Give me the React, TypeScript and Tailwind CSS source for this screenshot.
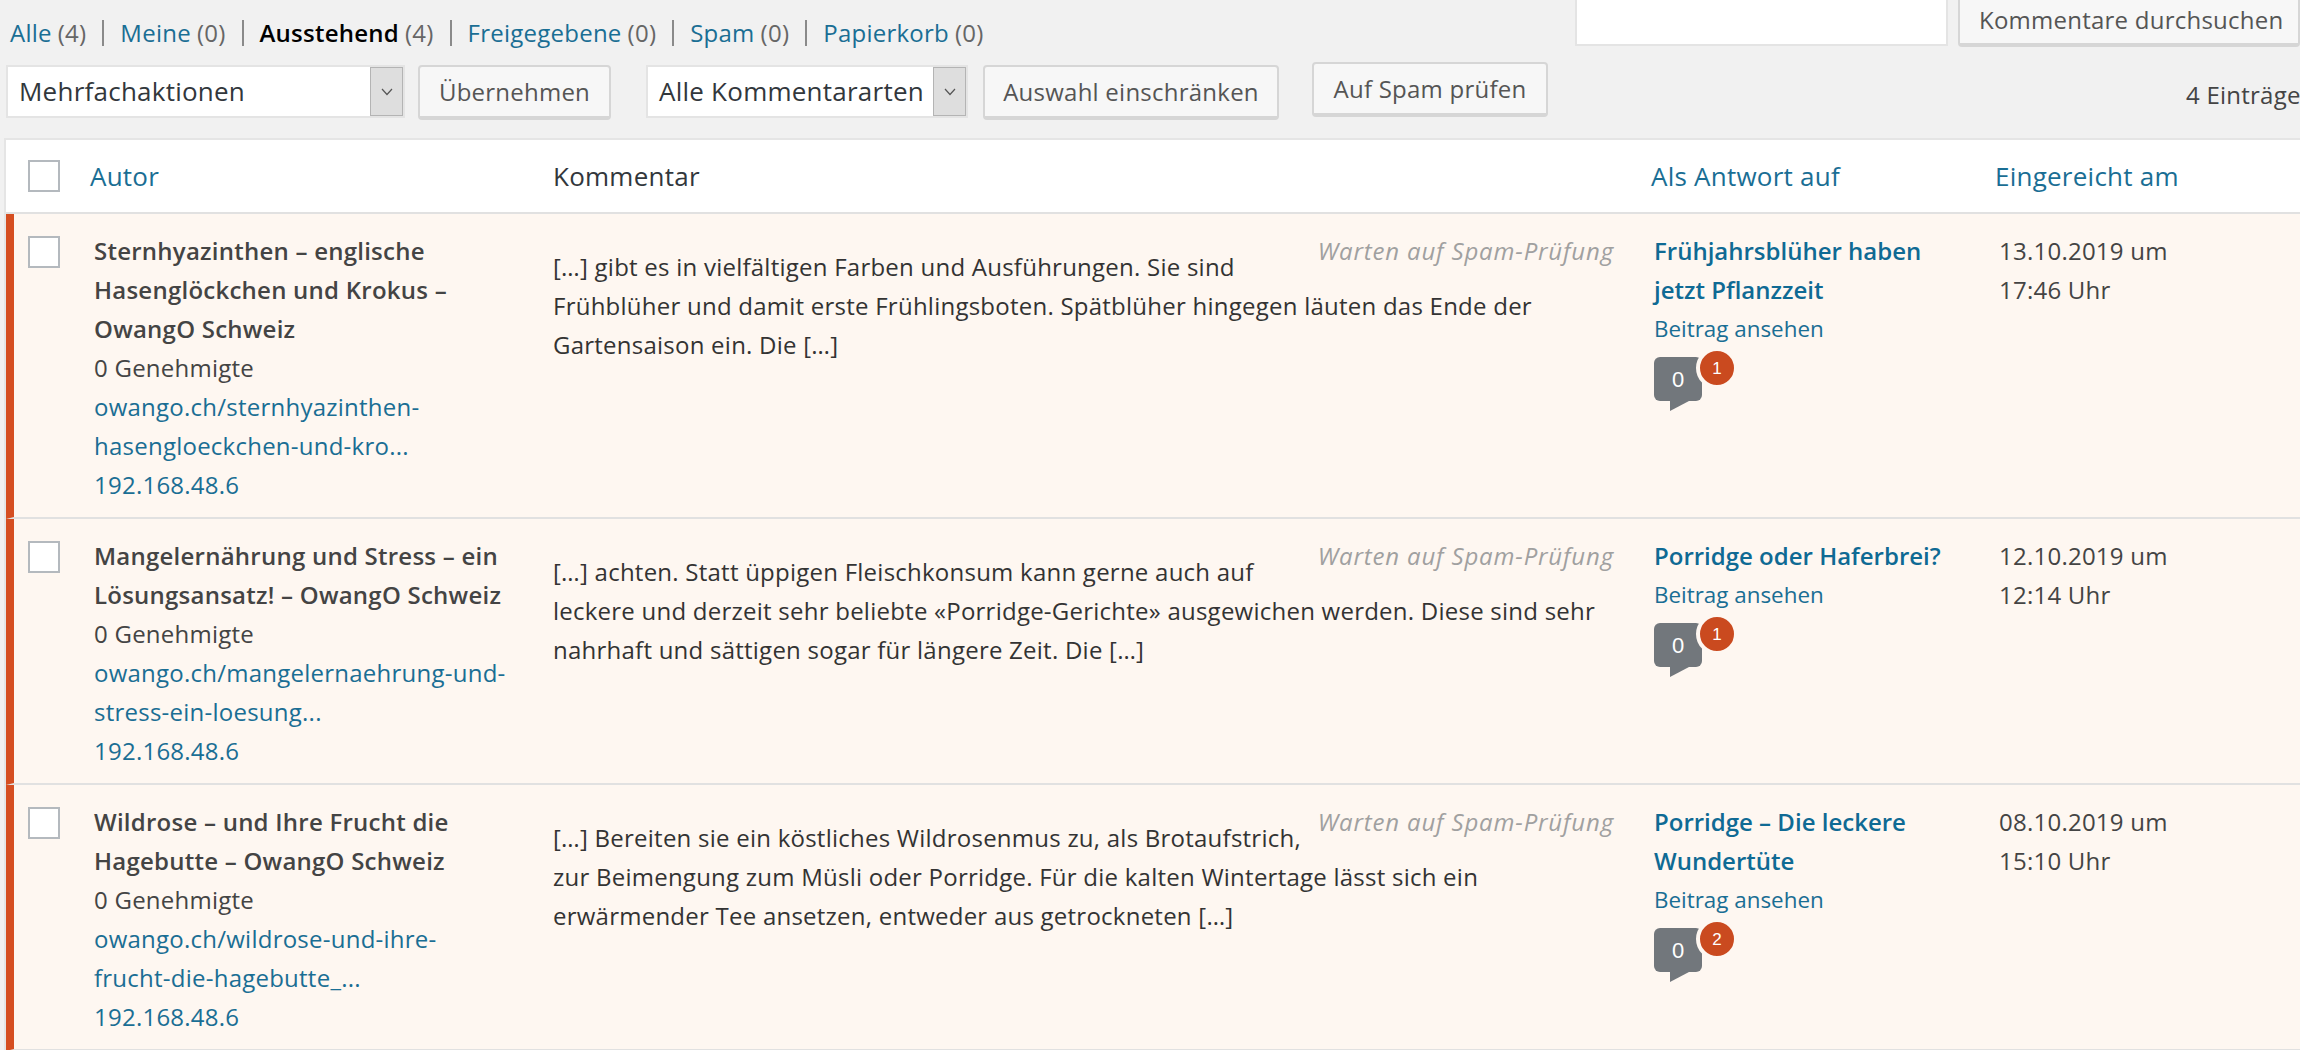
const filters = [
  { label: "Alle", count: 4 },
  { label: "Meine", count: 0 },
  { label: "Ausstehend", count: 4, current: true },
  { label: "Freigegebene", count: 0 },
  { label: "Spam", count: 0 },
  { label: "Papierkorb", count: 0 },
];

const comments = [
  {
    author: ["Sternhyazinthen – englische", "Hasenglöckchen und Krokus –", "OwangO Schweiz"],
    url: ["owango.ch/sternhyazinthen-", "hasengloeckchen-und-kro..."],
    text: [
      "[…] gibt es in vielfältigen Farben und Ausführungen. Sie sind",
      "Frühblüher und damit erste Frühlingsboten. Spätblüher hingegen läuten das Ende der",
      "Gartensaison ein. Die […]",
    ],
    post: ["Frühjahrsblüher haben", "jetzt Pflanzzeit"],
    pending: 1,
    date: ["13.10.2019 um", "17:46 Uhr"],
  },
  {
    author: ["Mangelernährung und Stress – ein", "Lösungsansatz! – OwangO Schweiz"],
    url: ["owango.ch/mangelernaehrung-und-", "stress-ein-loesung..."],
    text: [
      "[…] achten. Statt üppigen Fleischkonsum kann gerne auch auf",
      "leckere und derzeit sehr beliebte «Porridge-Gerichte» ausgewichen werden. Diese sind sehr",
      "nahrhaft und sättigen sogar für längere Zeit. Die […]",
    ],
    post: ["Porridge oder Haferbrei?"],
    pending: 1,
    date: ["12.10.2019 um", "12:14 Uhr"],
  },
  {
    author: ["Wildrose – und Ihre Frucht die", "Hagebutte – OwangO Schweiz"],
    url: ["owango.ch/wildrose-und-ihre-", "frucht-die-hagebutte_..."],
    text: [
      "[…] Bereiten sie ein köstliches Wildrosenmus zu, als Brotaufstrich,",
      "zur Beimengung zum Müsli oder Porridge. Für die kalten Wintertage lässt sich ein",
      "erwärmender Tee ansetzen, entweder aus getrockneten […]",
    ],
    post: ["Porridge – Die leckere", "Wundertüte"],
    pending: 2,
    date: ["08.10.2019 um", "15:10 Uhr"],
  },
];

function Checkbox() {
  return <div className="h-8 w-8 border-2 border-[#b4b9be] bg-white" />;
}

function SelectBox({ label, className }: { label: string; className: string }) {
  return (
    <div className={`flex h-[53px] items-stretch border-2 border-[#e4e4e4] bg-white pl-[11px] ${className}`}>
      <span className="flex-1 self-center whitespace-nowrap text-[26px] text-[#32373c]">{label}</span>
      <span className="flex w-[33px] items-center justify-center border border-[#b4b4b4] bg-[#dedede]">
        <svg width="12" height="8" viewBox="0 0 12 8" fill="none" stroke="#555" strokeWidth="1.2">
          <path d="M1 1l5 5.5L11 1" />
        </svg>
      </span>
    </div>
  );
}

function Button({ label, className }: { label: string; className: string }) {
  return (
    <div
      className={`flex items-center justify-center whitespace-nowrap rounded-[4px] border-2 border-[#d6d6d6] border-b-[4px] bg-[#f7f7f7] text-[#555] ${className}`}
    >
      {label}
    </div>
  );
}

function Bubble({ count }: { count: number }) {
  return (
    <div className="relative mt-[9px] h-[54px] w-[48px]">
      <div className="flex h-[44px] w-[48px] items-center justify-center rounded-[6px] bg-[#72777c] font-['Liberation_Sans',sans-serif] text-[22px] tracking-normal text-white">
        0
      </div>
      <svg className="absolute left-4 top-[44px]" width="19" height="10" viewBox="0 0 19 10" fill="#72777c">
        <path d="M0 0h19L0 10z" />
      </svg>
      <div className="absolute left-[42px] top-[-10px] flex h-[42px] w-[42px] items-center justify-center rounded-full border-[4px] border-[#fef7f1] bg-[#ca4a1f] font-['Liberation_Sans',sans-serif] text-[17px] tracking-normal text-white">
        {count}
      </div>
    </div>
  );
}

export default function App() {
  return (
    <div className="h-[1050px] w-[2300px] overflow-hidden bg-[#f1f1f1] font-['Open_Sans',sans-serif] text-[24px] leading-[39px] tracking-[0.01em] text-[#444]">
      <div className="flex h-[47px] items-start">
        <div className="ml-[10px] mt-[13px] flex items-center">
          {filters.map((filter, index) => (
            <span key={filter.label} className="flex items-center">
              {index > 0 && <span className="mx-[16px] h-[26px] w-[2px] bg-[#8a8a8a]" />}
              <span className={filter.current ? "font-semibold text-black" : "text-[#1a6e94]"}>{filter.label}</span>
              <span className="ml-[6px] text-[#666]">({filter.count})</span>
            </span>
          ))}
        </div>
        <div className="ml-auto h-[46px] w-[373px] border-2 border-t-0 border-[#e4e4e4] bg-white" />
        <div className="ml-[10px] flex h-[47px] w-[342px] items-center rounded-b-[4px] border-2 border-t-0 border-[#d6d6d6] border-b-[4px] bg-[#f7f7f7] pb-[4px] pl-[19px] text-[#555]">
          Kommentare durchsuchen
        </div>
      </div>

      <div className="flex h-[91px] items-start pt-[18px]">
        <SelectBox label="Mehrfachaktionen" className="ml-[6px] w-[399px]" />
        <Button label="Übernehmen" className="ml-[13px] h-[55px] w-[193px]" />
        <SelectBox label="Alle Kommentararten" className="ml-[35px] w-[322px]" />
        <Button label="Auswahl einschränken" className="ml-[15px] h-[55px] w-[296px]" />
        <Button label="Auf Spam prüfen" className="ml-[33px] -mt-[3px] h-[55px] w-[236px]" />
        <span className="ml-auto mt-[10px] w-[114px] whitespace-nowrap">4 Einträge</span>
      </div>

      <div className="ml-[4px] border-t-2 border-l-2 border-[#e5e5e5]">
        <div className="grid h-[74px] grid-cols-[84px_463px_1098px_344px_1fr] items-center border-b-2 border-[#e1e1e1] bg-white text-[26px]">
          <div className="pl-[22px]">
            <Checkbox />
          </div>
          <span className="text-[#1a6e94]">Autor</span>
          <span className="text-[#32373c]">Kommentar</span>
          <span className="text-[#1a6e94]">Als Antwort auf</span>
          <span className="text-[#1a6e94]">Eingereicht am</span>
        </div>

        {comments.map((comment) => (
          <div
            key={comment.date[0]}
            className="grid grid-cols-[80px_459px_1101px_344px_1fr] border-b-2 border-l-[8px] border-b-[#e1e1e1] border-l-[#d54e21] bg-[#fef7f1] pb-[13px] pt-[17px]"
          >
            <div className="pl-[14px] pt-[5px]">
              <Checkbox />
            </div>
            <div>
              <div className="font-semibold">
                {comment.author.map((line) => (
                  <div key={line} className="whitespace-nowrap">{line}</div>
                ))}
              </div>
              <div>0 Genehmigte</div>
              <div className="text-[#1a6e94]">
                {comment.url.map((line) => (
                  <div key={line} className="whitespace-nowrap">{line}</div>
                ))}
                <div>192.168.48.6</div>
              </div>
            </div>
            <div className="pr-[40px]">
              <span className="float-right italic tracking-[0.035em] text-[#a0a0a0]">Warten auf Spam-Prüfung</span>
              <p className="pt-[16px] text-[#333]">
                {comment.text.map((line) => (
                  <span key={line} className="block whitespace-nowrap">{line}</span>
                ))}
              </p>
            </div>
            <div>
              <div className="font-semibold tracking-normal text-[#0f6a94]">
                {comment.post.map((line) => (
                  <div key={line} className="whitespace-nowrap">{line}</div>
                ))}
              </div>
              <div className="text-[22.4px] tracking-normal text-[#1a6e94]">Beitrag ansehen</div>
              <Bubble count={comment.pending} />
            </div>
            <div className="pl-[1px]">
              {comment.date.map((line) => (
                <div key={line} className="whitespace-nowrap">{line}</div>
              ))}
            </div>
          </div>
        ))}
      </div>
    </div>
  );
}
